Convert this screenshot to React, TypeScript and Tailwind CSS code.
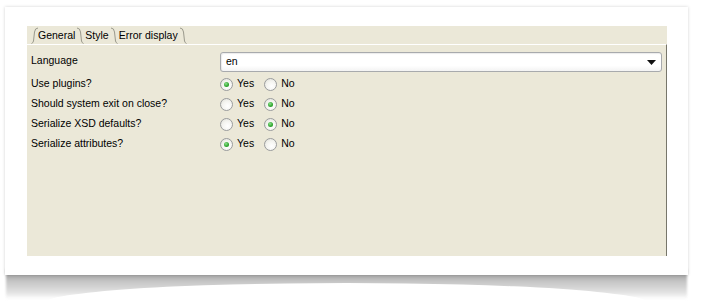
import { ReactNode } from 'react';

type Choice = 'yes' | 'no';

const rows: { label: string; value: Choice }[] = [
  { label: 'Use plugins?', value: 'yes' },
  { label: 'Should system exit on close?', value: 'no' },
  { label: 'Serialize XSD defaults?', value: 'no' },
  { label: 'Serialize attributes?', value: 'yes' },
];

function Radio({ checked, children }: { checked: boolean; children: ReactNode }) {
  return (
    <div className="flex items-center gap-[4px]">
      <span className="w-[13px] h-[13px] rounded-full border border-[#9a9c9e] bg-[radial-gradient(circle_at_60%_65%,#ffffff_0%,#f4f4f0_50%,#dcdcd4_100%)] flex items-center justify-center">
        {checked && (
          <span className="w-[5px] h-[5px] rounded-full bg-[radial-gradient(circle_at_40%_35%,#8ee08e_0%,#2fa52f_60%,#1d8a1d_100%)]" />
        )}
      </span>
      <span>{children}</span>
    </div>
  );
}

function Tab({ label, active }: { label: string; active?: boolean }) {
  return (
    <div className={`relative h-[17px] flex items-center pr-[7px] ${active ? 'pl-[7px]' : 'pl-[3px]'}`}>
      <span>{label}</span>
      <svg className="absolute right-[-2px] top-0" width="8" height="17" viewBox="0 0 8 17">
        <path d="M1 1 Q4 1 4.5 5 L5.5 14 Q6 16 7.5 16.5" fill="none" stroke="#9a998c" strokeWidth="1" />
      </svg>
    </div>
  );
}

export default function App() {
  return (
    <div className="w-[702px] h-[305px] overflow-hidden bg-white pt-[7px] pl-[5px] font-['Liberation_Sans',Tahoma,sans-serif] text-[10.5px] text-black">
      <div className="relative w-[683px]">
        {/* curved drop shadow */}
        <div className="absolute left-[1px] right-[1px] top-[262px] h-[30px] bg-[linear-gradient(to_bottom,#8a8a8a,#c4c4c4_40%,#e4e4e4_80%,transparent)] blur-[1px]" />
        <div className="absolute left-[40px] right-[40px] top-[276px] h-[40px] rounded-[50%] bg-white" />

        <div className="relative h-[268px] bg-white shadow-[0_0_3px_rgba(0,0,0,0.18)] pt-[19px] pl-[22px]">
          <div className="w-[640px] h-[230px] bg-[#ebe8d8] flex flex-col">
            <div className="h-[17px] flex items-end pl-[4px] mt-[1px]">
              <div className="flex h-[17px]">
                <div className="relative">
                  <svg className="absolute left-0 top-0" width="8" height="17" viewBox="0 0 8 17">
                    <path d="M0.5 16.5 Q2 16 2.5 14 L3.5 5 Q4 1 7 1" fill="none" stroke="#9a998c" strokeWidth="1" />
                  </svg>
                </div>
                <Tab label="General" active />
                <Tab label="Style" />
                <Tab label="Error display" />
              </div>
            </div>
            <div className="flex-1 border-t border-white border-r border-r-[#77766a] pt-[7px] pl-[4px] pr-[4px]">
              <div className="flex items-center h-[20px] mb-[2px]">
                <div className="w-[189px] -mt-[2px]">Language</div>
                <div className="flex-1 h-[20px] rounded-[3px] border border-[#a8aaad] bg-[linear-gradient(to_bottom,#ffffff,#ffffff_70%,#f3f3f3)] shadow-[inset_1px_1px_1px_rgba(0,0,0,0.08)] flex items-center justify-between pl-[5px] pr-[5px]">
                  <span>en</span>
                  <svg width="9" height="5" viewBox="0 0 9 5">
                    <path d="M0 0 H9 L4.5 5 Z" fill="#111" />
                  </svg>
                </div>
              </div>
              {rows.map((row) => (
                <div key={row.label} className="flex items-center h-[20px]">
                  <div className="w-[189px]">{row.label}</div>
                  <div className="flex items-center gap-[10px]">
                    <Radio checked={row.value === 'yes'}>Yes</Radio>
                    <Radio checked={row.value === 'no'}>No</Radio>
                  </div>
                </div>
              ))}
            </div>
          </div>
        </div>
      </div>
    </div>
  );
}
